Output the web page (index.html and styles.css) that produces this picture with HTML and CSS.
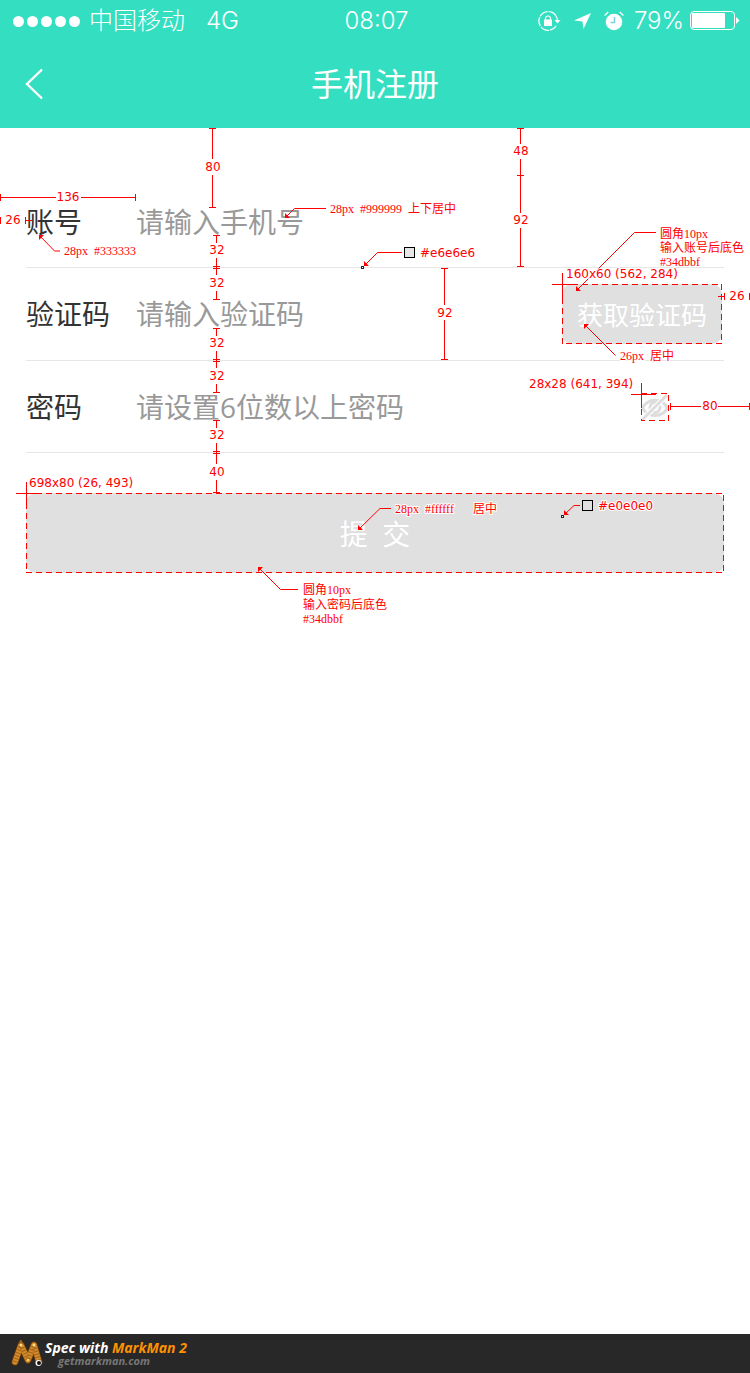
FILE: index.html
```html
<!DOCTYPE html>
<html lang="zh-CN">
<head>
<meta charset="utf-8">
<meta name="viewport" content="width=device-width, initial-scale=1">
<title>手机注册</title>
<link rel="stylesheet" href="styles.css">
</head>
<body>
<div class="page">
  <header class="header">
    <div class="status">
      <div class="status-left">
        <span class="signal"><i></i><i></i><i></i><i></i><i></i></span>
        <span class="carrier">中国移动</span>
        <span class="network">4G</span>
      </div>
      <span class="clock">08:07</span>
      <div class="status-right">
        <svg class="icon-lock" width="24" height="20" viewBox="0 0 24 20" aria-hidden="true">
          <path d="M18.2 5.2A9.3 9.3 0 1 0 10 19.3A9.3 9.3 0 0 0 18.2 14.8" fill="none" stroke="#fff" stroke-width="1.2" stroke-dasharray="9 1"/>
          <path d="M18.2 5.2Q19.3 7 19.3 9" fill="none" stroke="#fff" stroke-width="1.2"/>
          <path d="M16.5 9h6l-3 3.5z" fill="#fff"/>
          <rect x="6" y="8.500" width="8" height="6.500" fill="#fff"/>
          <path d="M7.5 9.500V7.500a2.500 2.500 0 0 1 5 0V9.500" fill="none" stroke="#fff" stroke-width="1.2"/>
        </svg>
        <svg class="icon-arrow" width="18" height="18" viewBox="0 0 18 18" aria-hidden="true"><path d="M17 1L0 8.500L8.500 9.500L9.500 17z" fill="#fff"/></svg>
        <svg class="icon-alarm" width="20" height="20" viewBox="0 0 20 20" aria-hidden="true">
          <circle cx="10" cy="11" r="8.300" fill="#fff"/>
          <path d="M.6 4.500L4.200 1M15.800 1l3.600 3.500" stroke="#fff" stroke-width="1.300" fill="none"/>
          <path d="M10.500 6v5.500H6.500" fill="none" stroke="#7fcfe0" stroke-width="1.600"/>
        </svg>
        <span class="percent">79%</span>
        <svg class="icon-battery" width="50" height="20" viewBox="0 0 50 20" aria-hidden="true">
          <rect x=".5" y=".5" width="44" height="18" rx="3.500" fill="none" stroke="#fff"/>
          <rect x="2" y="2" width="33" height="15" rx="1" fill="#fff"/>
          <path d="M46 6v7l3.500-3.500z" fill="#fff"/>
        </svg>
      </div>
    </div>
    <nav class="nav">
      <a class="back" href="#" aria-label="返回"><svg width="18" height="32" viewBox="0 0 18 32"><path d="M17 1.500L2 16L17 30.500" fill="none" stroke="#fff" stroke-width="2.400"/></svg></a>
      <h1 class="title">手机注册</h1>
    </nav>
  </header>

  <form class="form">
    <div class="row">
      <label class="label" for="account">账号</label>
      <input class="field" id="account" type="text" placeholder="请输入手机号">
    </div>
    <div class="row row-code">
      <label class="label" for="code">验证码</label>
      <input class="field" id="code" type="text" placeholder="请输入验证码">
      <div class="measured code-box">
        <button class="code-button" type="button">获取验证码</button>
        <svg class="dashes" aria-hidden="true"><rect width="100%" height="100%"/></svg>
      </div>
    </div>
    <div class="row">
      <label class="label" for="password">密码</label>
      <input class="field" id="password" type="password" placeholder="请设置6位数以上密码">
      <div class="measured eye-box">
        <button class="eye-button" type="button" aria-label="显示密码">
          <svg width="28" height="28" viewBox="0 0 28 28">
            <path d="M1.500 15C7 4.500 21 4.500 26.500 15C21 25 7 25 1.500 15z" fill="none" stroke="#dcdcdc" stroke-width="3"/>
            <circle cx="14" cy="14.500" r="5" fill="none" stroke="#dcdcdc" stroke-width="3"/>
            <path d="M0 24.500L24 .5L28 3.500L4 27.500z" fill="#fff"/>
            <path d="M1.500 26.500L26 2" stroke="#dcdcdc" stroke-width="2.800"/>
          </svg>
        </button>
        <svg class="dashes" aria-hidden="true"><rect width="100%" height="100%"/></svg>
      </div>
    </div>
    <div class="measured submit-box">
      <button class="submit" type="submit">提&nbsp;&nbsp;交</button>
      <svg class="dashes" aria-hidden="true"><rect width="100%" height="100%"/></svg>
    </div>
  </form>

  <svg class="marks marks-left" width="500" height="640" viewBox="0 0 500 640">
    <g class="line">
      <path d="M212.500 128V159M212.500 175V207M209 128.500h7M209 207.500h7"/>
      <path d="M216.500 235V243M216.500 258V275M216.500 291V299M213 235.500h7M213 266.500h7M213 268.500h7M213 299.500h7"/>
      <path d="M216.500 328V336M216.500 351V368M216.500 384V392M213 328.500h7M213 359.500h7M213 361.500h7M213 392.500h7"/>
      <path d="M216.500 420V428M216.500 443V464M216.500 480V492M213 420.500h7M213 451.500h7M213 453.500h7M213 492.500h7"/>
      <path d="M444.500 268V305M444.500 320V359M441 268.500h7M441 359.500h7"/>
      <path d="M0 197.500H56M81 197.500H136M.5 194v7M135.500 194v7"/>
      <path d="M.5 217v7M25.500 217v7M25 220.500h7"/>
      <path d="M16 493.500h24M26.500 482v27"/>
      <path d="M39.500 235.500L54.500 251H60M285.500 217.500L294.500 208.500H326M364.500 265.500L377.500 252.500H402M358.500 529.500L380 508.500H391M258.500 567.500L280.500 589.500H298"/>
    </g>
    <g class="head">
      <path d="M39 235h5l-5 5zM285 218v-5l5 5zM364 266v-5l5 5zM358 530v-5l5 5zM258 567h5l-5 5z"/>
    </g>
    <rect class="pin" x="361.500" y="266.500" width="2" height="2"/>
    <rect class="swatch-e6" x="404.500" y="247.500" width="10" height="10"/>
    <g class="number">
      <text x="213" y="171">80</text>
      <text x="217" y="254">32</text>
      <text x="217" y="287">32</text>
      <text x="217" y="347">32</text>
      <text x="217" y="380">32</text>
      <text x="217" y="439">32</text>
      <text x="217" y="476">40</text>
      <text x="445" y="317">92</text>
      <text x="68" y="201">136</text>
      <text x="13" y="224">26</text>
    </g>
    <g class="size">
      <text x="420" y="257">#e6e6e6</text>
      <text x="29" y="487">698x80 (26, 493)</text>
    </g>
    <g class="note">
      <text x="64" y="255">28px <tspan x="94">#333333</tspan></text>
      <text x="330" y="213">28px <tspan x="360">#999999 </tspan><tspan x="408">上下居中</tspan></text>
      <text x="395" y="513">28px <tspan x="425">#ffffff </tspan><tspan x="473">居中</tspan></text>
      <text x="303" y="594">圆角10px</text>
      <text x="303" y="609">输入密码后底色</text>
      <text x="303" y="623">#34dbbf</text>
    </g>
  </svg>

  <svg class="marks marks-right" width="250" height="640" viewBox="500 0 250 640">
    <g class="line">
      <path d="M520.500 128V144M520.500 159V213M520.500 228V266M517 128.500h7M517 175.500h7M517 266.500h7"/>
      <path d="M718 296.500h6M724.500 293v7M749.500 293v7"/>
      <path d="M670 406.500H701M718 406.500H750M670.500 403v7M749.500 403v7"/>
      <path d="M552 284.500h25M562.500 273v26M631 394.500h25M641.500 383v25"/>
      <path d="M576.500 290.500L634.500 232.500H656M584.500 324.500L615.500 355.500M564.500 514.500L574 505.500H580"/>
    </g>
    <g class="head">
      <path d="M576 291v-5l5 5zM584 324h5l-5 5zM564 515v-5l5 5z"/>
    </g>
    <rect class="pin" x="561.500" y="515.500" width="2" height="2"/>
    <rect class="swatch-e0" x="582.500" y="500.500" width="10" height="10"/>
    <g class="number">
      <text x="521" y="155">48</text>
      <text x="521" y="224">92</text>
      <text x="737" y="300">26</text>
      <text x="710" y="410">80</text>
    </g>
    <g class="size">
      <text x="566" y="278">160x60 (562, 284)</text>
      <text x="529" y="388">28x28 (641, 394)</text>
      <text x="598" y="510">#e0e0e0</text>
    </g>
    <g class="note">
      <text x="660" y="238">圆角10px</text>
      <text x="660" y="252">输入账号后底色</text>
      <text x="660" y="266">#34dbbf</text>
      <text x="620" y="360">26px <tspan x="650">居中</tspan></text>
    </g>
  </svg>

  <footer class="footer">
    <svg width="32" height="28" viewBox="0 0 32 28" aria-hidden="true">
      <g fill="none" stroke-linecap="round">
        <path d="M4 22L10 5L17 20L23 5L28 22" stroke="#6e3c08" stroke-width="7" stroke-linejoin="round"/>
        <path d="M4 22L10 5L17 20L23 5L28 22" stroke="#d08a2c" stroke-width="5.500" stroke-linejoin="round"/>
        <path d="M4 22L10 5L17 20L23 5L28 22" stroke="#a3641a" stroke-width="5" stroke-linecap="butt" stroke-dasharray="1 2"/>
      </g>
      <circle cx="10" cy="5" r="1.500" fill="#ffe08a"/><circle cx="23" cy="5" r="1.500" fill="#ffe08a"/><circle cx="17" cy="20" r="1.300" fill="#ffd060"/>
      <circle cx="27.500" cy="23" r="3" fill="#fff"/><circle cx="28" cy="23" r="2" fill="#111"/>
    </svg>
    <div class="credit">
      <p class="credit-name">Spec with <b>MarkMan 2</b></p>
      <p class="credit-site">getmarkman.com</p>
    </div>
  </footer>
</div>
</body>
</html>
```
FILE: styles.css
```css
* { box-sizing: border-box; }
body {
  margin: 0;
  background: #fff;
  font-family: "Open Sans", "Noto Sans CJK SC", sans-serif;
}
button, input { font-family: inherit; }
svg { display: block; }

.page {
  position: relative;
  display: flex;
  flex-direction: column;
  min-height: 100vh;
}

.header { background: #34dec1; color: #fff; }
.status {
  display: grid;
  grid-template-columns: 1fr auto 1fr;
  align-items: center;
  height: 40px;
  padding: 1px 10px 0 13px;
  font-family: Inter, "Noto Sans CJK SC", sans-serif;
  font-size: 24px;
  font-weight: 300;
  line-height: 40px;
}
.status-left, .status-right { display: flex; align-items: center; }
.status-right { justify-content: flex-end; }
.signal { display: flex; gap: 3px; }
.signal i { width: 11px; height: 11px; border-radius: 50%; background: #fff; }
.carrier { margin-left: 9px; }
.network { margin-left: 21px; }
.icon-arrow { margin-left: 12px; }
.icon-alarm { margin-left: 12px; }
.percent { margin: 0 6px 0 10px; }

.nav {
  display: grid;
  grid-template-columns: 1fr auto 1fr;
  align-items: center;
  height: 88px;
  padding: 0 25px;
}
.back { justify-self: start; }
.title {
  margin: 0;
  padding-bottom: 4px;
  font-family: "Noto Sans CJK SC", sans-serif;
  font-size: 32px;
  font-weight: 400;
  line-height: 48px;
}

.form { padding: 48px 26px 40px; }
.row {
  display: flex;
  align-items: center;
  height: 92px;
  border-bottom: 1px solid #e6e6e6;
}
.row-code { height: 93px; }
.label {
  flex: none;
  width: 110px;
  color: #333;
  font-size: 28px;
  line-height: 40px;
}
.field {
  flex: 1;
  min-width: 0;
  height: 60px;
  padding: 0;
  border: 0;
  outline: 0;
  background: none;
  color: #333;
  font-size: 28px;
}
.field::placeholder { color: #999; opacity: 1; }

.measured { position: relative; flex: none; }
.dashes {
  position: absolute;
  inset: 0;
  width: 100%;
  height: 100%;
  pointer-events: none;
}
.dashes rect {
  fill: none;
  stroke: #f00;
  stroke-width: 2px;
  stroke-dasharray: 6 4;
}
.code-box { margin-right: 2px; }
.code-button {
  display: block;
  width: 160px;
  height: 60px;
  padding: 0;
  border: 0;
  border-radius: 10px;
  background: #e0e0e0;
  color: #fff;
  font-size: 26px;
}
.eye-box { margin-right: 55px; }
.eye-button { display: block; padding: 0; border: 0; background: none; }
.submit-box { margin-top: 40px; }
.submit {
  display: block;
  width: 100%;
  height: 80px;
  border: 0;
  border-radius: 10px;
  background: #e0e0e0;
  color: #fff;
  font-size: 28px;
}

.marks { position: absolute; top: 0; pointer-events: none; }
.marks-left { left: 0; }
.marks-right { right: 0; }
.line { fill: none; stroke: #f00; stroke-width: 1px; }
.head { fill: #f00; }
.pin { fill: #fff; stroke: #222; }
.swatch-e6 { fill: #e6e6e6; stroke: #000; }
.swatch-e0 { fill: #e0e0e0; stroke: #000; }
.marks text {
  fill: #f00;
  stroke: #fff;
  stroke-width: 2px;
  stroke-linejoin: round;
  paint-order: stroke;
}
.number, .size { font: 12px "DejaVu Sans", sans-serif; }
.number { text-anchor: middle; }
.note { font: 12px "Liberation Serif", "Noto Sans CJK SC", serif; }

.footer {
  display: flex;
  align-items: center;
  gap: 2px;
  height: 39px;
  margin-top: auto;
  padding-left: 11px;
  background: #282828;
  font-style: italic;
  font-weight: 700;
}
.credit p { margin: 0; }
.credit-name { color: #fff; font-size: 14px; line-height: 14px; }
.credit-name b { color: #ff9100; font-weight: 700; }
.credit-site { padding-left: 13px; color: #777; font-size: 11px; line-height: 12px; }
```
